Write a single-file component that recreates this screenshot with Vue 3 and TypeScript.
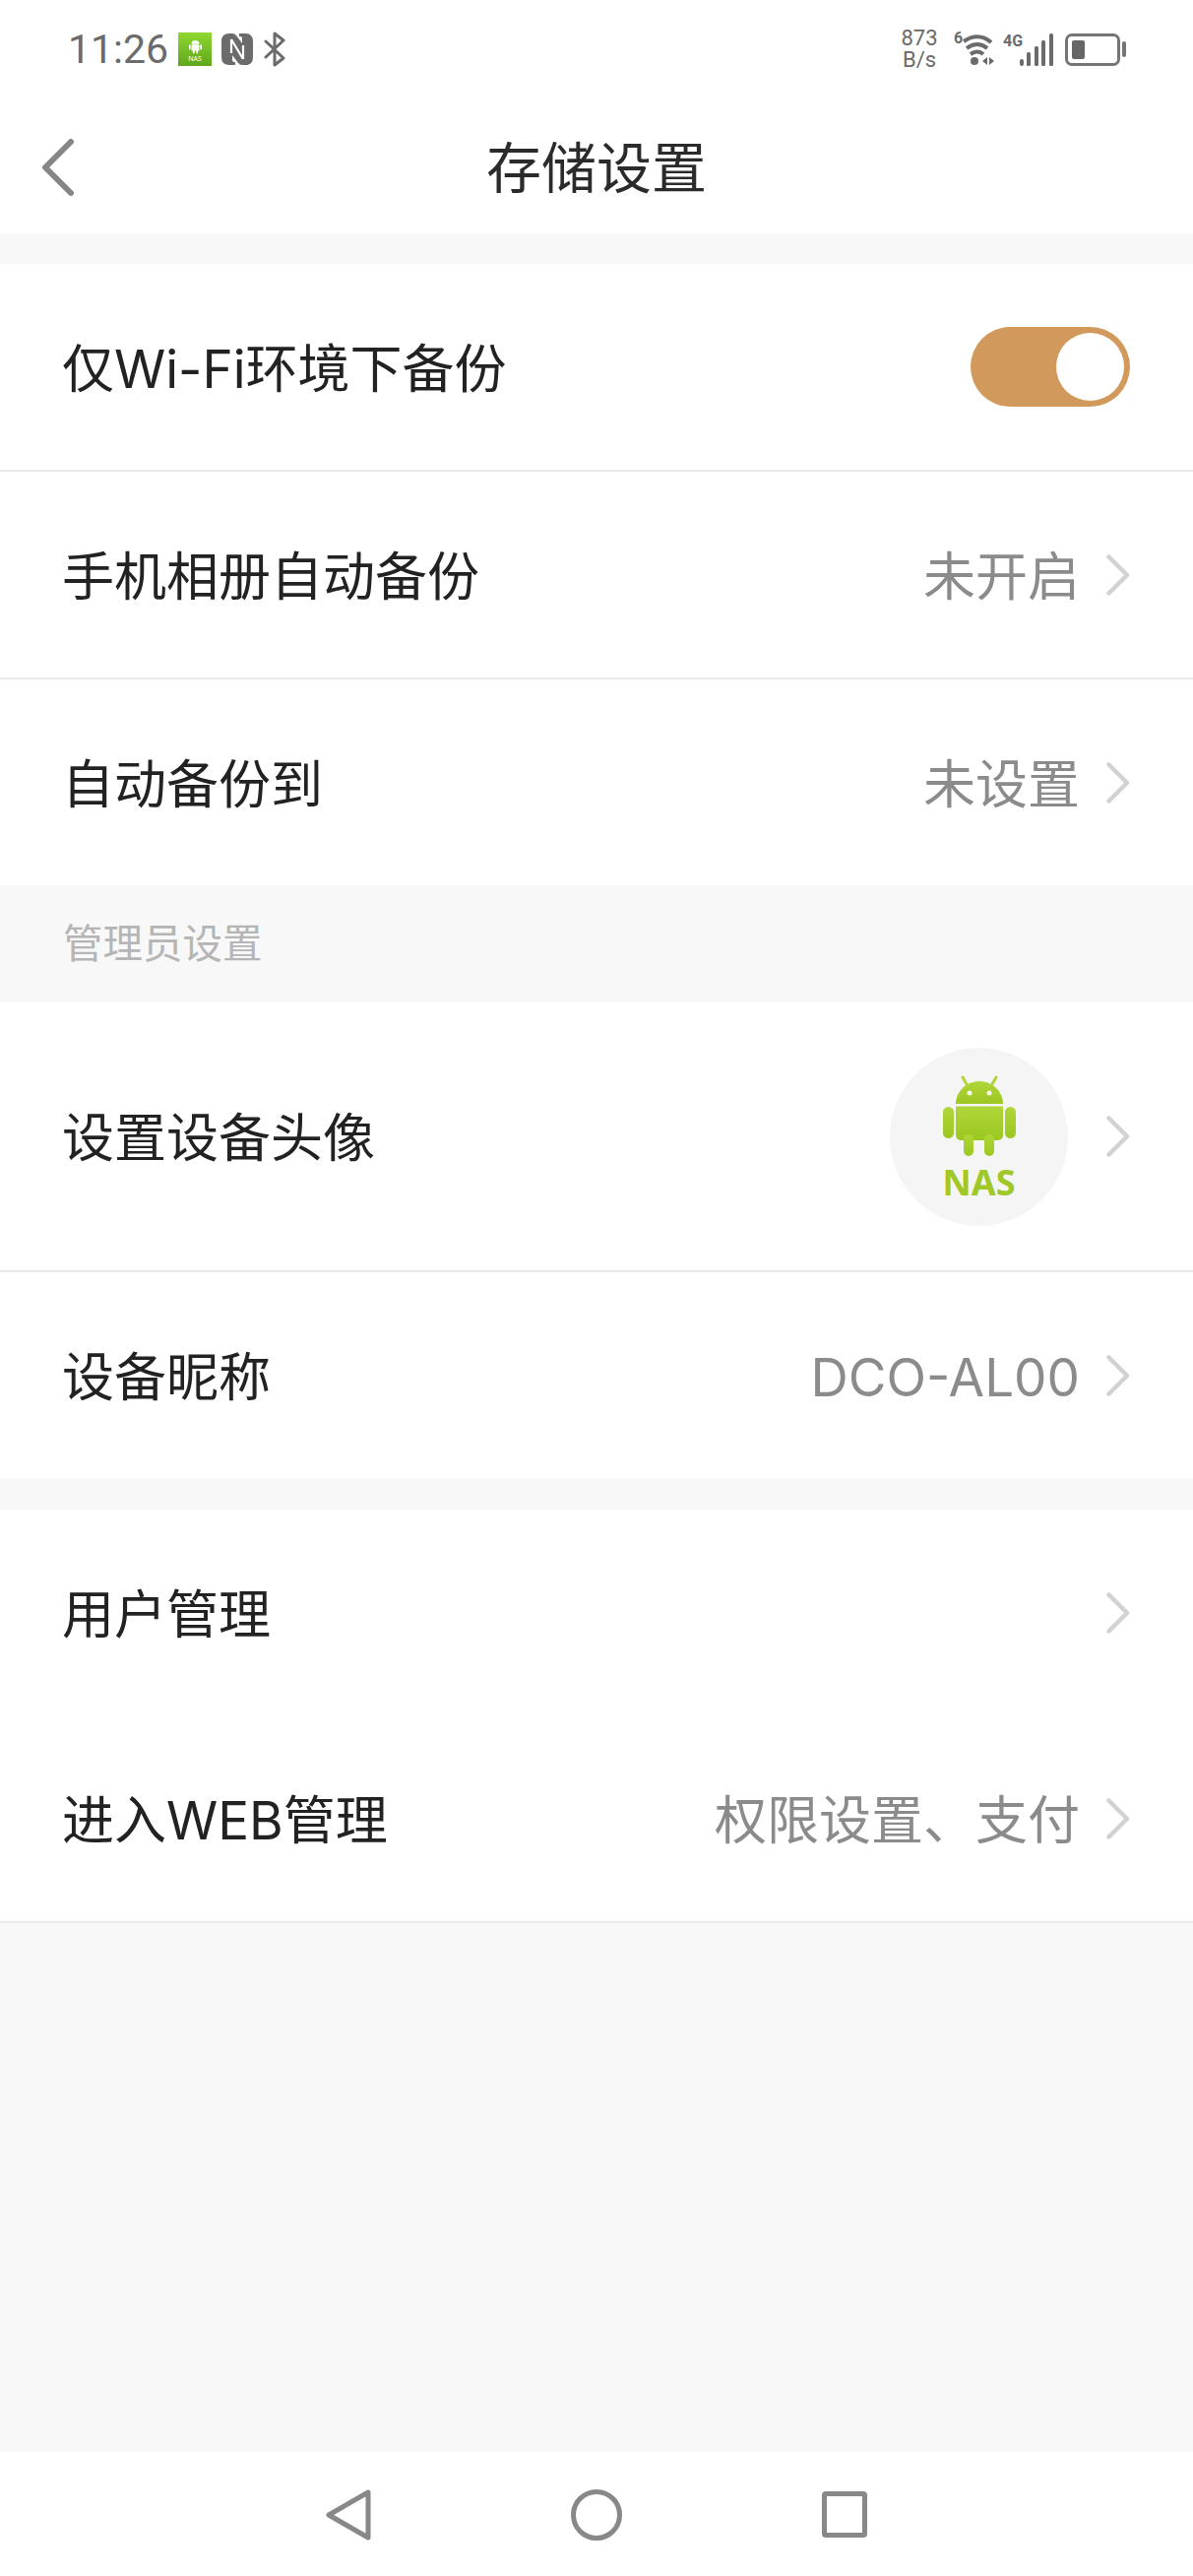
<script setup lang="ts">
interface Row {
  label: string
  value?: string
  divider?: boolean
}
const firstGroup: Row[] = [
  { label: '手机相册自动备份', value: '未开启', divider: true },
  { label: '自动备份到', value: '未设置' },
]
const lastGroup: Row[] = [
  { label: '用户管理' },
  { label: '进入WEB管理', value: '权限设置、支付', divider: true },
]
</script>

<template>
  <div class="page">
    <div class="top">
      <div class="status">
        <div class="status-left">
          <span class="time">11:26</span>
          <div class="nas-badge">
            <svg class="badge-robot" viewBox="0 0 48 60" fill="#fff">
              <path d="M10 24a14 13 0 0 1 28 0z" />
              <rect x="10" y="26" width="28" height="22" rx="3" />
              <rect x="1" y="26" width="6" height="18" rx="3" />
              <rect x="41" y="26" width="6" height="18" rx="3" />
              <rect x="15" y="44" width="6" height="14" rx="3" />
              <rect x="27" y="44" width="6" height="14" rx="3" />
            </svg>
            <span class="badge-text">NAS</span>
          </div>
          <svg class="nfc" viewBox="0 0 32 32">
            <path fill="#6b6b6b" d="M8 0h3q2.500 0 4 2l6 8V5q0-2-2-2h-1V0h6q8 0 8 8v16q0 8-8 8h-3q-2.500 0-4-2l-6-8v5q0 2 2 2h1v3H8q-8 0-8-8V8q0-8 8-8z" />
            <path fill="none" stroke="#fff" stroke-width="2.200" d="M10 6 22 26M10 6v14M22 26V12" />
          </svg>
          <svg class="bluetooth" viewBox="0 0 22 36" fill="none" stroke="#6b6b6b" stroke-width="3" stroke-linecap="round" stroke-linejoin="round">
            <path d="M2 10 20 27 11 34V2l9 7L2 26" />
          </svg>
        </div>
        <div class="status-right">
          <div class="speed"><span>873</span><span>B/s</span></div>
          <svg class="wifi" viewBox="0 0 42 34" fill="none">
            <path d="M10 9Q25 -1 38 10M13 16Q24 8 34 16M17 22Q24 17 30 22" stroke="#6b6b6b" stroke-width="4" />
            <circle cx="21" cy="29" r="4" fill="#6b6b6b" />
            <path d="M34 25v8l-5-4zM36 25v8l5-4z" fill="#6b6b6b" />
          </svg>
          <span class="wifi-six">6</span>
          <div class="cell">
            <span class="cell-type">4G</span>
            <svg class="signal" viewBox="0 0 34 33" fill="#6b6b6b">
              <rect x="0" y="26" width="4" height="7" rx="2" />
              <rect x="7" y="19" width="4" height="14" rx="1.500" />
              <rect x="15" y="13" width="4" height="20" rx="1.500" />
              <rect x="22" y="7" width="4" height="26" rx="1.500" />
              <rect x="30" y="0" width="4" height="33" rx="1.500" />
            </svg>
          </div>
          <div class="battery">
            <div class="battery-body"><div class="battery-level"></div></div>
            <div class="battery-nub"></div>
          </div>
        </div>
      </div>
      <header class="header">
        <svg class="back" viewBox="0 0 34 60" fill="none" stroke="#868686" stroke-width="6" stroke-linecap="round" stroke-linejoin="round">
          <path d="M30 4 4 30l26 26" />
        </svg>
        <h1 class="title">存储设置</h1>
      </header>
    </div>

    <div class="gap"></div>

    <section class="group">
      <div class="row divider">
        <span class="label">仅Wi-Fi环境下备份</span>
        <div class="toggle"><div class="knob"></div></div>
      </div>
      <div v-for="row in firstGroup" :key="row.label" class="row" :class="{ divider: row.divider }">
        <span class="label">{{ row.label }}</span>
        <div class="end">
          <span class="value">{{ row.value }}</span>
          <svg class="chev" viewBox="0 0 24 42" fill="none" stroke="#d2d2d2" stroke-width="4.500" stroke-linecap="round" stroke-linejoin="round"><path d="M2.500 2.500 21 21 2.500 39.500" /></svg>
        </div>
      </div>
    </section>

    <div class="section-title"><span>管理员设置</span></div>

    <section class="group">
      <div class="row row-tall divider">
        <span class="label">设置设备头像</span>
        <div class="end end-avatar">
          <div class="avatar">
            <svg class="robot" viewBox="0 0 74 82">
              <defs>
                <linearGradient id="robotGreen" x1="0" y1="0" x2="0" y2="1">
                  <stop offset="0" stop-color="#b0d63a" />
                  <stop offset="1" stop-color="#9bc820" />
                </linearGradient>
              </defs>
              <g fill="url(#robotGreen)">
                <path d="M13 29a24 23 0 0 1 48 0z" />
                <path d="M13 31.500h48V60q0 6-6 6H19q-6 0-6-6z" />
                <rect x="0" y="32" width="11" height="32" rx="5.500" />
                <rect x="63" y="32" width="11" height="32" rx="5.500" />
                <rect x="21" y="60" width="10" height="22" rx="5" />
                <rect x="42" y="60" width="10" height="22" rx="5" />
              </g>
              <path d="M24 9 20 2M50 9l4-7" stroke="#b0d63a" stroke-width="3" stroke-linecap="round" />
              <circle cx="27" cy="18" r="2.500" fill="#f5f5f5" />
              <circle cx="47" cy="18" r="2.500" fill="#f5f5f5" />
            </svg>
            <span class="avatar-text">NAS</span>
          </div>
          <svg class="chev" viewBox="0 0 24 42" fill="none" stroke="#d2d2d2" stroke-width="4.500" stroke-linecap="round" stroke-linejoin="round"><path d="M2.500 2.500 21 21 2.500 39.500" /></svg>
        </div>
      </div>
      <div class="row">
        <span class="label">设备昵称</span>
        <div class="end">
          <span class="value">DCO-AL00</span>
          <svg class="chev" viewBox="0 0 24 42" fill="none" stroke="#d2d2d2" stroke-width="4.500" stroke-linecap="round" stroke-linejoin="round"><path d="M2.500 2.500 21 21 2.500 39.500" /></svg>
        </div>
      </div>
    </section>

    <div class="gap"></div>

    <section class="group">
      <div v-for="row in lastGroup" :key="row.label" class="row" :class="{ divider: row.divider }">
        <span class="label">{{ row.label }}</span>
        <div class="end">
          <span v-if="row.value" class="value">{{ row.value }}</span>
          <svg class="chev" viewBox="0 0 24 42" fill="none" stroke="#d2d2d2" stroke-width="4.500" stroke-linecap="round" stroke-linejoin="round"><path d="M2.500 2.500 21 21 2.500 39.500" /></svg>
        </div>
      </div>
    </section>

    <div class="fill"></div>

    <nav class="nav">
      <svg class="nav-back" viewBox="0 0 46 52" fill="none" stroke="#888" stroke-width="5" stroke-linejoin="round"><path d="M43 3v46L3 26z" /></svg>
      <svg class="nav-home" viewBox="0 0 52 52" fill="none" stroke="#888" stroke-width="5"><circle cx="26" cy="26" r="23.500" /></svg>
      <svg class="nav-recent" viewBox="0 0 46 47" fill="none" stroke="#888" stroke-width="5" stroke-linejoin="round"><rect x="2.500" y="2.500" width="41" height="42" rx="1.500" /></svg>
    </nav>
  </div>
</template>

<style scoped>
.page {
  width: 1212px;
  height: 2616px;
  display: flex;
  flex-direction: column;
  background: #f8f8f8;
  font-family: Inter, "Noto Sans CJK SC", sans-serif;
  color: #222;
  overflow: hidden;
}
.top { background: #fff; height: 237px; flex: none; }
.status {
  height: 100px;
  display: flex;
  justify-content: space-between;
  align-items: center;
  padding: 0 68px 0 69px;
  box-sizing: border-box;
}
.status-left { display: flex; align-items: center; }
.time {
  font-family: Roboto, sans-serif;
  font-size: 41px;
  line-height: 50px;
  color: #6b6b6b;
  width: 112px;
}
.nas-badge {
  width: 34px;
  height: 34px;
  background: linear-gradient(180deg, #90d830, #5fa71c);
  display: flex;
  flex-direction: column;
  align-items: center;
  padding-top: 5px;
  box-sizing: border-box;
}
.badge-robot { width: 15px; height: 17px; display: block; }
.badge-text {
  font-family: "Noto Sans", sans-serif;
  font-size: 7px;
  line-height: 8px;
  color: #fff;
  margin-top: 1px;
}
.nfc { width: 32px; height: 32px; margin-left: 10px; }
.bluetooth { width: 22px; height: 36px; margin-left: 11px; }
.status-right { display: flex; align-items: center; position: relative; }
.speed {
  display: flex;
  flex-direction: column;
  align-items: center;
  width: 38px;
  font-family: Roboto, sans-serif;
  font-size: 22px;
  line-height: 22px;
  color: #6b6b6b;
}
.wifi { width: 42px; height: 34px; margin-left: 16px; }
.wifi-six {
  position: absolute;
  left: 54px;
  top: 2px;
  font-family: Roboto, sans-serif;
  font-size: 16px;
  line-height: 18px;
  font-weight: 700;
  color: #6b6b6b;
}
.cell { position: relative; width: 51px; height: 33px; margin-left: 8px; }
.cell-type {
  position: absolute;
  left: 0;
  top: -1px;
  font-family: Roboto, sans-serif;
  font-size: 16px;
  line-height: 18px;
  font-weight: 700;
  color: #6b6b6b;
}
.signal { position: absolute; right: 0; top: 0; width: 34px; height: 33px; }
.battery { display: flex; align-items: center; margin-left: 12px; }
.battery-body {
  width: 56px;
  height: 33px;
  border: 3px solid #757575;
  border-radius: 7px;
  box-sizing: border-box;
  padding: 4px;
}
.battery-level { width: 13px; height: 100%; background: #666; border-radius: 2px; }
.battery-nub { width: 4px; height: 16px; background: #757575; border-radius: 2px; margin-left: 2px; }

.header { position: relative; height: 137px; display: flex; align-items: center; justify-content: center; }
.back { position: absolute; left: 42px; top: 40px; width: 34px; height: 60px; }
.title { margin: 4px 0 0; font-size: 56px; line-height: 72px; font-weight: 400; color: #2b2b2b; }

.gap { height: 31px; flex: none; }
.gap + .group + .section-title + .group + .gap { height: 32px; }
.group { background: #fff; flex: none; }
.row {
  height: 209px;
  display: flex;
  align-items: center;
  justify-content: space-between;
  padding: 0 64px 0 63px;
  box-sizing: border-box;
}
.row.divider { border-bottom: 2px solid #e9e9e9; height: 211px; }
.row-tall.divider { height: 274px; }
.label { font-size: 53px; line-height: 70px; color: #222; margin-top: 4px; }
.end { display: flex; align-items: center; gap: 27px; }
.end-avatar { gap: 39px; }
.value { font-size: 53px; line-height: 70px; color: #8b8b8b; margin-top: 4px; }
.chev { width: 24px; height: 42px; flex: none; }

.toggle {
  width: 162px;
  height: 81px;
  border-radius: 41px;
  background: #d19a5c;
  display: flex;
  align-items: center;
  justify-content: flex-end;
  padding-right: 6px;
  box-sizing: border-box;
}
.knob { width: 69px; height: 69px; border-radius: 50%; background: #fff; }

.section-title {
  height: 119px;
  flex: none;
  display: flex;
  align-items: center;
  padding-left: 64px;
  font-size: 40.500px;
  color: #b5b5b5;
}
.section-title span { margin-top: -6px; }

.avatar {
  width: 181px;
  height: 181px;
  border-radius: 50%;
  background: #f5f5f5;
  display: flex;
  flex-direction: column;
  align-items: center;
  padding-top: 28px;
  box-sizing: border-box;
}
.robot { width: 74px; height: 82px; display: block; }
.avatar-text {
  font-family: "Noto Sans", sans-serif;
  font-weight: 700;
  font-size: 36px;
  line-height: 40px;
  color: #a0c828;
  margin-top: 7px;
}

.fill { flex: 1; }
.nav {
  height: 126px;
  flex: none;
  background: #fff;
  display: flex;
  align-items: center;
  justify-content: center;
  gap: 203px;
  padding-top: 1px;
  box-sizing: border-box;
}
.nav-back { width: 46px; height: 52px; }
.nav-home { width: 52px; height: 52px; }
.nav-recent { width: 46px; height: 47px; }
</style>
